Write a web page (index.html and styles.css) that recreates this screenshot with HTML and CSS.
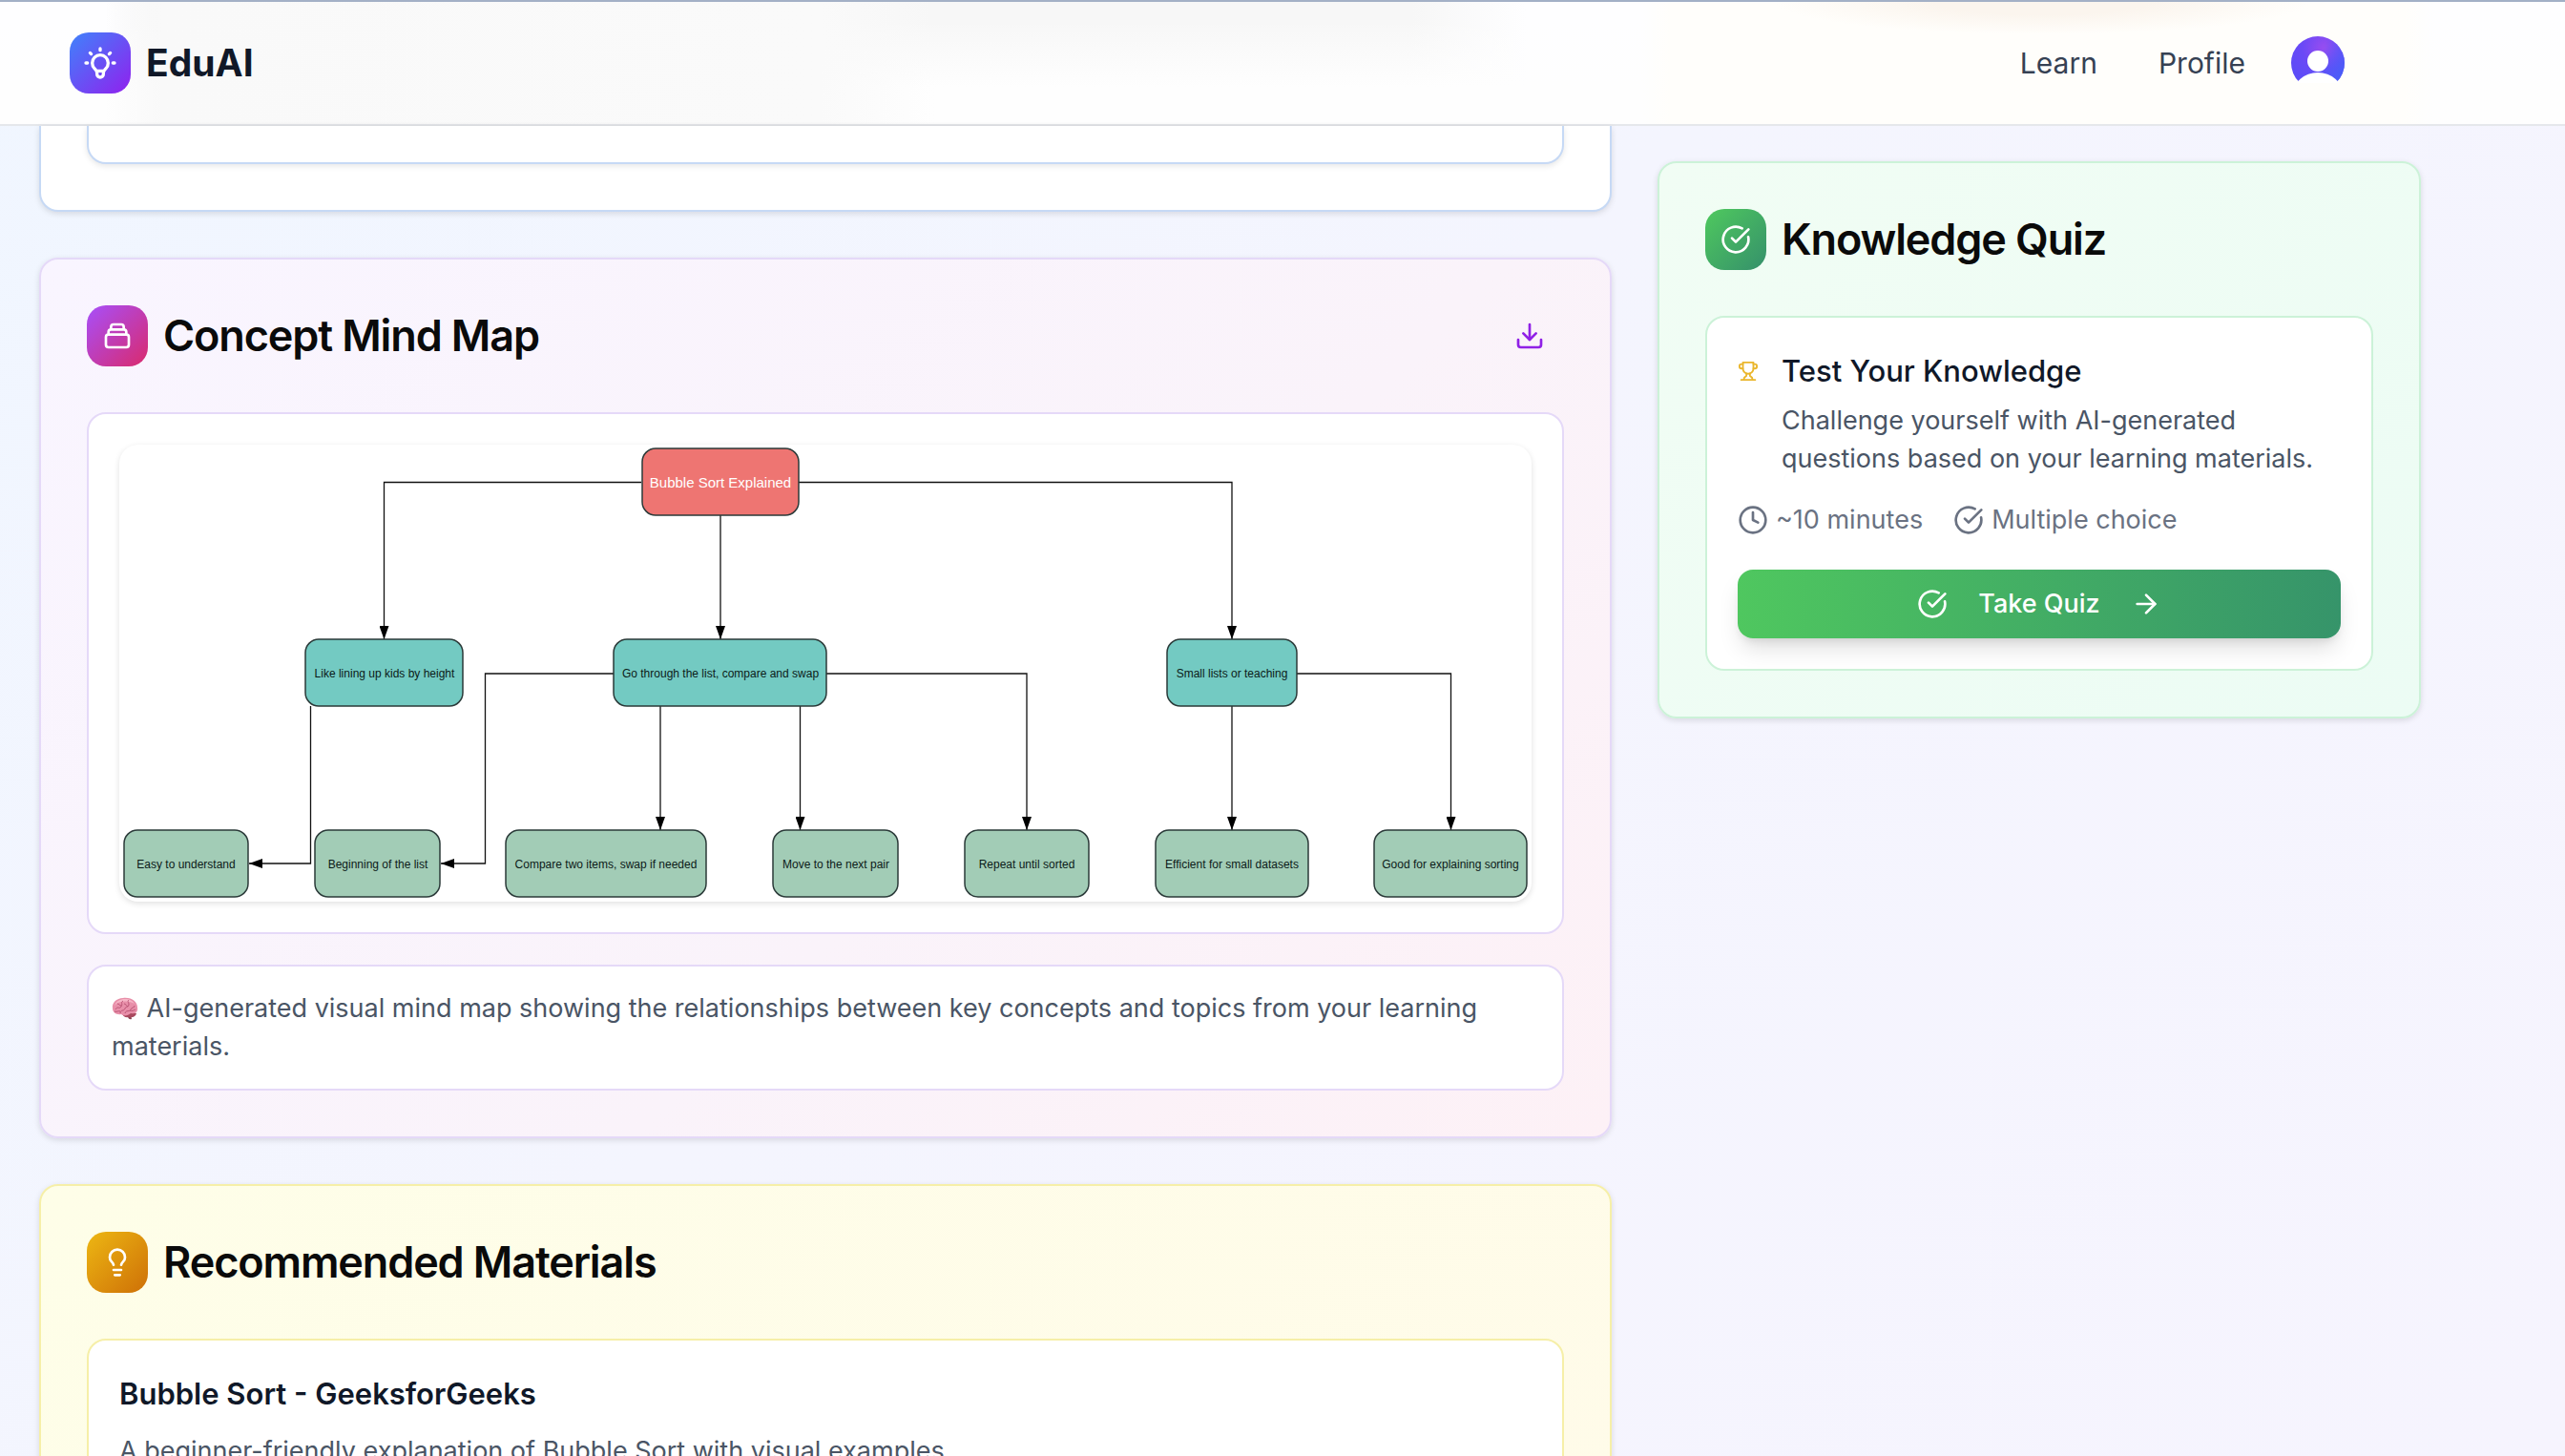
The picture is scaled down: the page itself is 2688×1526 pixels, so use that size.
FILE: index.html
```html
<!DOCTYPE html>
<html lang="en">
<head>
<meta charset="utf-8">
<meta name="viewport" content="width=device-width, initial-scale=1">
<title>EduAI</title>
<link rel="stylesheet" href="styles.css">
</head>
<body>
<header class="topbar">
  <a class="brand" href="#">
    <span class="tile tile-brand">
      <svg class="icon-lg" viewBox="0 0 24 24" aria-hidden="true"><path d="M9.663 17h4.673M12 3v1m6.364 1.636l-.707.707M21 12h-1M4 12H3m3.343-5.657l-.707-.707m2.828 9.9a5 5 0 117.072 0l-.548.547A3.374 3.374 0 0014 18.469V19a2 2 0 11-4 0v-.531c0-.895-.356-1.754-.988-2.386l-.548-.547z"/></svg>
    </span>
    <span class="brand-name">EduAI</span>
  </a>
  <nav class="nav">
    <a class="nav-link" href="#">Learn</a>
    <a class="nav-link" href="#">Profile</a>
    <button class="avatar" type="button" aria-label="Account">
      <svg viewBox="0 0 56 56" aria-hidden="true">
        <defs>
          <radialGradient id="av" cx="0.62" cy="0.22" r="0.75"><stop offset="0" stop-color="#9a4df0"/><stop offset="0.55" stop-color="#6a49f6"/><stop offset="1" stop-color="#5b4cf7"/></radialGradient>
          <linearGradient id="avb" x1="0.45" y1="0.4" x2="1" y2="0.75"><stop offset="0" stop-color="#4f5bf8" stop-opacity="0"/><stop offset="1" stop-color="#465ff8"/></linearGradient>
          <clipPath id="avc"><path d="M0 0h56v49H0z"/></clipPath>
        </defs>
        <g clip-path="url(#avc)">
          <circle cx="28" cy="28" r="28" fill="url(#av)"/>
          <circle cx="28" cy="28" r="28" fill="url(#avb)"/>
          <circle cx="28" cy="26" r="11" fill="#fff"/>
          <ellipse cx="28" cy="61" rx="26" ry="23" fill="#fff"/>
        </g>
      </svg>
    </button>
  </nav>
</header>

<main class="page">
  <div class="column-main">
    <section class="card card-blue">
      <div class="panel panel-blue"></div>
    </section>

    <section class="card card-purple">
      <div class="card-head">
        <span class="tile tile-purple">
          <svg class="icon" viewBox="0 0 24 24" aria-hidden="true"><path d="M19 11H5m14 0a2 2 0 012 2v6a2 2 0 01-2 2H5a2 2 0 01-2-2v-6a2 2 0 012-2m14 0V9a2 2 0 00-2-2M5 11V9a2 2 0 012-2m0 0V5a2 2 0 012-2h6a2 2 0 012 2v2M7 7h10"/></svg>
        </span>
        <h2 class="card-title">Concept Mind Map</h2>
        <button class="icon-button" type="button" aria-label="Download mind map">
          <svg class="icon" viewBox="0 0 24 24" aria-hidden="true"><path d="M21 15v4a2 2 0 0 1-2 2H5a2 2 0 0 1-2-2v-4"/><path d="M7 10l5 5 5-5"/><path d="M12 15V3"/></svg>
        </button>
      </div>
      <div class="panel panel-purple">
        <svg class="mindmap" viewBox="0 0 1480 479" role="img" aria-label="Bubble sort mind map">
          <defs>
            <marker id="arrow" viewBox="0 0 14 10" refX="14" refY="5" markerWidth="14" markerHeight="10" markerUnits="userSpaceOnUse" orient="auto"><path d="M0 0L14 5L0 10z"/></marker>
          </defs>
          <g class="edges">
            <path d="M547 39.500H277.500V204"/>
            <path d="M630 74V204"/>
            <path d="M712 39.500H1166V204"/>
            <path d="M200.500 274V439H136"/>
            <path d="M518 240H383.500V439H337"/>
            <path d="M567 274V404"/>
            <path d="M713.500 274V404"/>
            <path d="M741 240H951V404"/>
            <path d="M1166 274V404"/>
            <path d="M1234 240H1395.500V404"/>
          </g>
          <g class="node node-root">
            <rect x="548" y="4" width="164" height="70" rx="14"/><text x="630" y="39">Bubble Sort Explained</text>
          </g>
          <g class="node node-branch">
            <rect x="195" y="204" width="165" height="70" rx="14"/><text x="278" y="240">Like lining up kids by height</text>
            <rect x="518" y="204" width="223" height="70" rx="14"/><text x="630" y="240">Go through the list, compare and swap</text>
            <rect x="1098" y="204" width="136" height="70" rx="14"/><text x="1166" y="240">Small lists or teaching</text>
          </g>
          <g class="node node-leaf">
            <rect x="5" y="404" width="130" height="70" rx="14"/><text x="70" y="440">Easy to understand</text>
            <rect x="205" y="404" width="131" height="70" rx="14"/><text x="271" y="440">Beginning of the list</text>
            <rect x="405" y="404" width="210" height="70" rx="14"/><text x="510" y="440">Compare two items, swap if needed</text>
            <rect x="685" y="404" width="131" height="70" rx="14"/><text x="751" y="440">Move to the next pair</text>
            <rect x="886" y="404" width="130" height="70" rx="14"/><text x="951" y="440">Repeat until sorted</text>
            <rect x="1086" y="404" width="160" height="70" rx="14"/><text x="1166" y="440">Efficient for small datasets</text>
            <rect x="1315" y="404" width="160" height="70" rx="14"/><text x="1395" y="440">Good for explaining sorting</text>
          </g>
        </svg>
      </div>
      <p class="note">
        <svg class="brain" viewBox="0 0 28 24" aria-hidden="true">
          <path d="M14 17l6 1 1 5q-3 1-4-2z" fill="#8c4552"/>
          <path d="M11 17q8-3 15 0-1 5-8 4-6 1-7-4z" fill="#a9485e"/>
          <path d="M1 12C0 6 5 1 12 1c9-1 15 4 15 10 1 5-3 7-7 6-3 3-8 3-10 1-5 1-9-2-9-6z" fill="#e88fa9"/>
          <path d="M3 9C5 4 9 2 14 2c5 0 8 2 10 5-5-3-16-4-21 2z" fill="#f6b5c6"/>
          <path d="M4 13c2-4 4 0 6-3s-1-4 2-6M9 17c0-4 4-2 5-5s4-1 4-4-2-3 0-5M14 17c1-4 5-1 6-4s4-1 4-4M6 7c2 0 2 2 4 2M13 7c2 0 2 2 4 3M3 15c3 1 4-1 6 0M19 14c2 1 4 0 6-1" fill="none" stroke="#bb5676" stroke-width="1"/>
        </svg>
        AI-generated visual mind map showing the relationships between key concepts and topics from your learning materials.</p>
    </section>

    <section class="card card-yellow">
      <div class="card-head">
        <span class="tile tile-yellow">
          <svg class="icon" viewBox="0 0 24 24" aria-hidden="true"><path d="M15 14c.2-1 .7-1.700 1.500-2.500 1-.9 1.500-2.200 1.500-3.500A6 6 0 0 0 6 8c0 1 .2 2.200 1.500 3.500.7.7 1.300 1.500 1.500 2.500"/><path d="M9 18h6"/><path d="M10 22h4"/></svg>
        </span>
        <h2 class="card-title">Recommended Materials</h2>
      </div>
      <article class="panel panel-yellow">
        <h3 class="material-title">Bubble Sort - GeeksforGeeks</h3>
        <p class="body-text">A beginner-friendly explanation of Bubble Sort with visual examples</p>
      </article>
    </section>
  </div>

  <aside class="column-side">
    <section class="card card-green">
      <div class="card-head">
        <span class="tile tile-green">
          <svg class="icon" viewBox="0 0 24 24" aria-hidden="true"><path d="M21.801 10A10 10 0 1 1 17 3.335"/><path d="m9 11 3 3L22 4"/></svg>
        </span>
        <h2 class="card-title">Knowledge Quiz</h2>
      </div>
      <div class="panel panel-green">
        <div class="quiz-intro">
          <svg class="trophy" viewBox="0 0 24 24" aria-hidden="true"><path d="M6 9H4.500a2.500 2.500 0 0 1 0-5H6"/><path d="M18 9h1.500a2.500 2.500 0 0 0 0-5H18"/><path d="M4 22h16"/><path d="M10 14.660V17c0 .55-.47.980-.97 1.210C7.850 18.750 7 20.240 7 22"/><path d="M14 14.660V17c0 .55.470.980.970 1.210C16.150 18.750 17 20.240 17 22"/><path d="M18 2H6v7a6 6 0 0 0 12 0V2Z"/></svg>
          <div class="quiz-copy">
            <h3 class="quiz-title">Test Your Knowledge</h3>
            <p class="body-text">Challenge yourself with AI-generated questions based on your learning materials.</p>
          </div>
        </div>
        <ul class="quiz-meta">
          <li><svg class="icon" viewBox="0 0 24 24" aria-hidden="true"><circle cx="12" cy="12" r="10"/><path d="M12 6v6l4 2"/></svg>~10 minutes</li>
          <li><svg class="icon" viewBox="0 0 24 24" aria-hidden="true"><path d="M21.801 10A10 10 0 1 1 17 3.335"/><path d="m9 11 3 3L22 4"/></svg>Multiple choice</li>
        </ul>
        <button class="quiz-button" type="button">
          <svg class="icon" viewBox="0 0 24 24" aria-hidden="true"><path d="M21.801 10A10 10 0 1 1 17 3.335"/><path d="m9 11 3 3L22 4"/></svg>
          Take Quiz
          <svg class="icon" viewBox="0 0 24 24" aria-hidden="true"><path d="M5 12h14"/><path d="m12 5 7 7-7 7"/></svg>
        </button>
      </div>
    </section>
  </aside>
</main>
</body>
</html>
```

FILE: styles.css
```css
* { box-sizing: border-box; }

body {
  margin: 0;
  height: 100vh;
  overflow: hidden;
  font-family: Inter, "Liberation Sans", sans-serif;
  font-size: 27px;
  line-height: 40px;
  color: #4a5565;
  background: linear-gradient(135deg, #f0f6ff 0%, #f4f5fe 45%, #f6f4fe 100%);
}

h2, h3, p, ul { margin: 0; padding: 0; }
a { color: inherit; text-decoration: none; }
button { font: inherit; border: 0; padding: 0; cursor: pointer; }

svg { display: block; flex: none; }
.icon, .icon-lg, .trophy {
  fill: none;
  stroke: currentColor;
  stroke-width: 2;
  stroke-linecap: round;
  stroke-linejoin: round;
}
.icon { width: 32px; height: 32px; }
.icon-lg { width: 40px; height: 40px; }

/* Header */
.topbar {
  display: flex;
  align-items: center;
  justify-content: space-between;
  height: 132px;
  padding: 0 231px 0 73px;
  border-top: 2px solid #a3b0c6;
  border-bottom: 2px solid #e5e7eb;
  background:
    radial-gradient(ellipse 280px 34px at 2140px 0, #fbf5ee 40%, transparent) no-repeat,
    linear-gradient(90deg, transparent 1720px, #fffefb 1750px, #fffefb 2520px, transparent 2550px),
    linear-gradient(90deg, transparent 110px, #f9f9f9 170px, #fafafa 860px, transparent 980px),
    linear-gradient(180deg, transparent 15%, #fefefe 70%),
    linear-gradient(90deg, transparent 110px, #f7f7f7 170px, #f7f7f7 1480px, transparent 1600px),
    #fefeff;
}
.brand { display: flex; align-items: center; gap: 16px; }
.brand-name { font-size: 39px; line-height: 56px; font-weight: 700; color: #101828; }
.nav { display: flex; align-items: center; }
.nav-link { margin-right: 64px; font-size: 30px; line-height: 48px; color: #364153; }
.nav-link + .nav-link { margin-right: 48px; }
.avatar { width: 56px; height: 56px; border-radius: 50%; background: none; }

/* Rounded icon tiles */
.tile {
  display: flex;
  align-items: center;
  justify-content: center;
  flex: none;
  width: 64px;
  height: 64px;
  border-radius: 20px;
  color: #fff;
}
.tile-brand { background: linear-gradient(135deg, #3f83fb, #9120ee); }
.tile-purple { background: linear-gradient(135deg, #a74ffb, #da2a6c); }
.tile-yellow { background: linear-gradient(135deg, #edb713, #ce7007); }
.tile-green { background: linear-gradient(135deg, #4fc95e, #35906b); }

/* Page grid */
.page {
  display: grid;
  grid-template-columns: repeat(12, minmax(0, 1fr));
  column-gap: 48px;
  align-items: start;
  padding: 0 151px 0 41px;
}
.column-main { grid-column: span 8; display: flex; flex-direction: column; gap: 48px; }
.column-side { grid-column: span 4; padding-top: 37px; }

/* Cards and panels */
.card {
  display: flex;
  flex-direction: column;
  padding: 48px;
  border: 2px solid;
  border-radius: 20px;
  box-shadow: 0 2px 6px rgba(0, 0, 0, 0.12);
}
.card-blue { padding-top: 0; border-top: 0; border-radius: 0 0 20px 20px; border-color: #c6d9f5; background: #fff; }
.card-purple { gap: 32px; border-color: #e5d9f8; background: linear-gradient(135deg, #f9f5ff, #faf3fa 60%, #fdf1f6); }
.card-yellow { border-color: #f6efa8; background: linear-gradient(135deg, #fefee8, #fffbe9); }
.card-green { border-color: #ccf2d8; background: linear-gradient(135deg, #f1fdf4, #ecfcf4); }

.card-head { display: flex; align-items: center; gap: 16px; margin-bottom: 48px; }
.card-purple .card-head { margin-bottom: 16px; }
.card-title { font-size: 45px; line-height: 64px; font-weight: 600; letter-spacing: -0.025em; color: #0a0a0a; }
.icon-button {
  display: flex;
  align-items: center;
  justify-content: center;
  width: 72px;
  height: 64px;
  margin-left: auto;
  border-radius: 16px;
  color: #9020e6;
  background: none;
}

.panel { padding: 32px; border: 2px solid; border-radius: 20px; background: #fff; }
.panel-blue { height: 40px; padding: 0; border-color: #c6d9f5; border-top: 0; border-radius: 0 0 20px 20px; box-shadow: 0 2px 6px rgba(0, 0, 0, 0.1); }
.panel-purple, .note { border-color: #e5d9f8; }
.panel-yellow { border-color: #f6efa8; }
.panel-green { border-color: #ccf2d8; }

/* Mind map */
.mindmap { width: 100%; height: auto; border-radius: 20px; box-shadow: 0 2px 6px rgba(0, 0, 0, 0.12); }
.edges path { fill: none; stroke: #111; stroke-width: 1.3; marker-end: url(#arrow); }
.node rect { stroke: #2b3a39; stroke-width: 1.5; }
.node text {
  font-family: "Liberation Sans", Arial, sans-serif;
  font-size: 12px;
  text-anchor: middle;
  dominant-baseline: central;
  fill: #0b1a18;
}
.node-root rect { fill: #ee7572; }
.node-root text { font-size: 15px; fill: #fff; }
.node-branch rect { fill: #73cac2; }
.node-leaf rect { fill: #a2ccb6; }

.note { padding: 24px; border: 2px solid #e5d9f8; border-radius: 20px; background: #fff; }
.brain { display: inline-block; width: 28px; height: 24px; margin-right: 1px; vertical-align: -3px; }

/* Materials */
.material-title { margin-bottom: 16px; font-size: 31px; line-height: 48px; font-weight: 600; color: #101828; }

/* Quiz */
.quiz-intro { display: flex; gap: 24px; }
.trophy { width: 22px; height: 48px; color: #eab62c; }
.quiz-title { margin-bottom: 8px; font-size: 31px; line-height: 48px; font-weight: 500; color: #101828; }
.quiz-meta { display: flex; gap: 32px; margin: 24px 0 32px; list-style: none; color: #6a7282; }
.quiz-meta li { display: flex; align-items: center; gap: 8px; }
.quiz-button {
  display: flex;
  align-items: center;
  justify-content: center;
  gap: 32px;
  width: 100%;
  height: 72px;
  border-radius: 16px;
  font-weight: 500;
  color: #fff;
  background: linear-gradient(90deg, #4fc75f, #36946a);
  box-shadow: 0 14px 24px -4px rgba(0, 0, 0, 0.13), 0 6px 10px -4px rgba(0, 0, 0, 0.1);
}
```
